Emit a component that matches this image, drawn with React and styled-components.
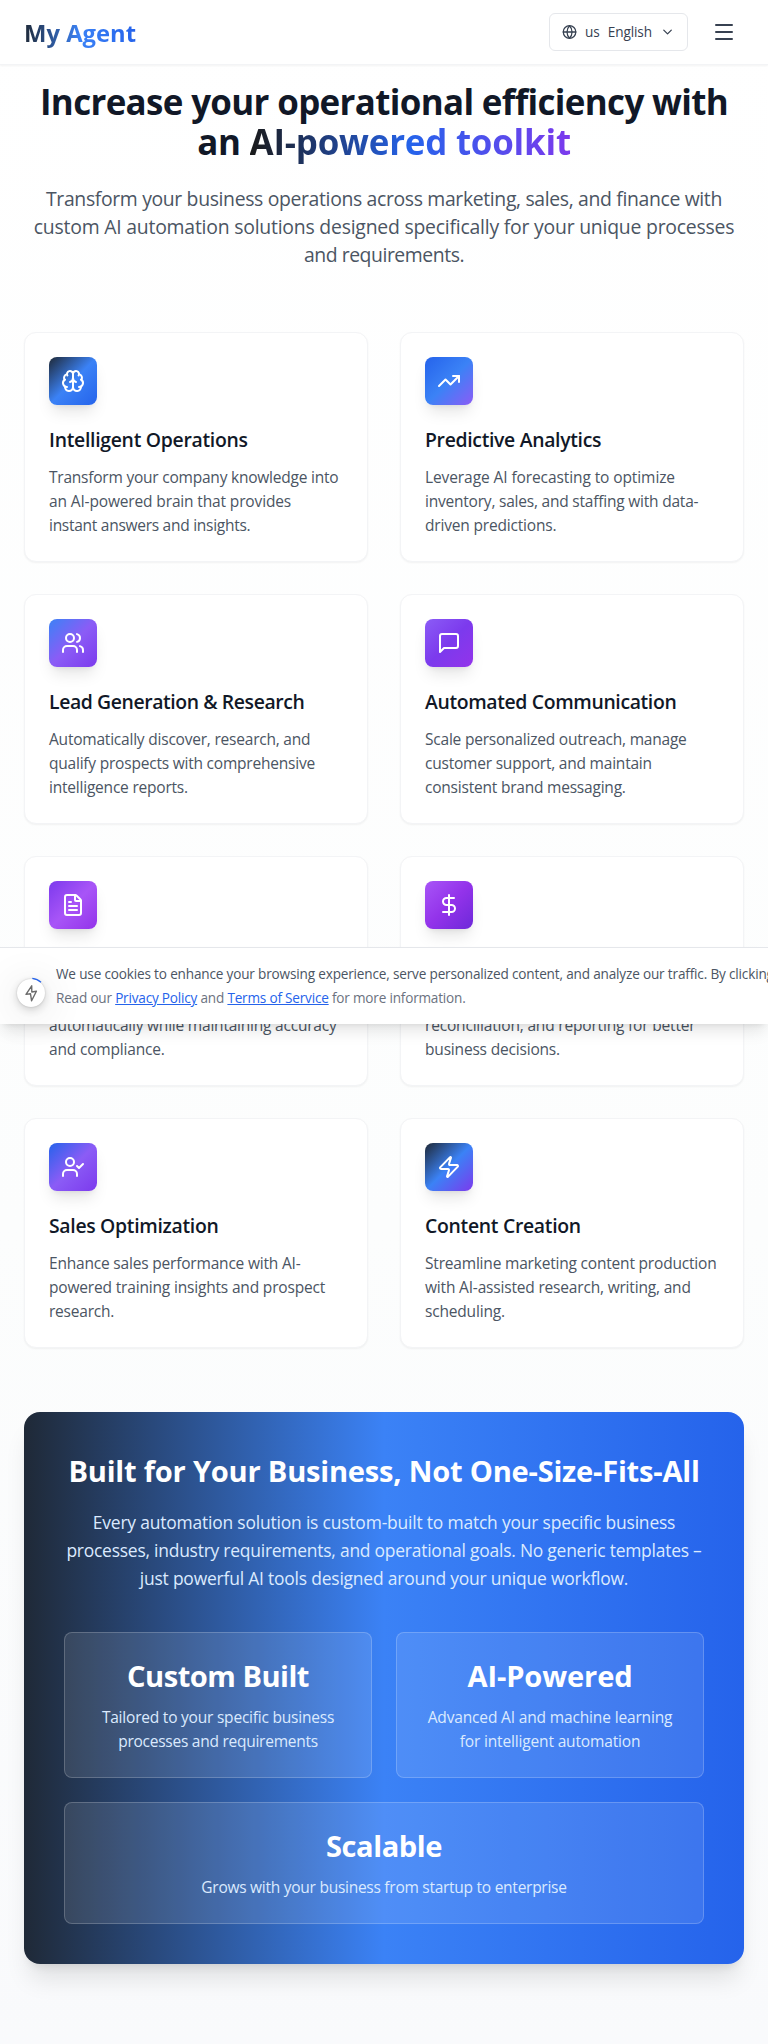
import React from "react";
import styled, { createGlobalStyle } from "styled-components";
import {
  Brain, TrendingUp, Users, FileText, DollarSign, UserCheck, Zap,
  Globe, ChevronDown, Menu,
} from "lucide-react";

const GlobalStyle = createGlobalStyle`
  *, *::before, *::after { box-sizing: border-box; }
  body {
    margin: 0;
    font-family: "Open Sans", "Noto Sans", sans-serif;
    color: #111827;
    background: #f9fafb;
  }
  h1, h2, h3, p { margin: 0; }
`;

const Page = styled.div`
  position: relative;
  width: 100%;
  min-height: 2044px;
  overflow: hidden;
  background: linear-gradient(180deg, #ffffff 0%, #fcfdfd 60%, #f9fafc 100%);
`;

const Header = styled.header`
  display: flex;
  align-items: center;
  justify-content: space-between;
  height: 65px;
  padding: 0 24px;
  background: #fff;
  border-bottom: 1px solid #f3f4f6;
  box-shadow: 0 1px 2px rgba(0, 0, 0, 0.05);
`;

const Logo = styled.div`
  padding-top: 1px;
  font-size: 23.8px;
  line-height: 32px;
  font-weight: 700;
  color: transparent;
  background: linear-gradient(90deg, #1f2937, #3b82f6, #2563eb);
  background-clip: text;
`;

const HeaderActions = styled.div`
  display: flex;
  align-items: center;
  gap: 16px;
`;

const LanguageButton = styled.button`
  display: flex;
  align-items: center;
  width: 139px;
  height: 38px;
  padding: 0 12px;
  gap: 8px;
  border: 1px solid #e5e7eb;
  border-radius: 6px;
  background: #fff;
  color: #374151;
  font: 400 13.6px/20px "Open Sans", sans-serif;
  letter-spacing: -0.1px;
  margin-bottom: 1px;
  svg:last-child { margin-left: auto; }
`;

const MenuButton = styled.button`
  display: grid;
  place-items: center;
  width: 40px;
  height: 40px;
  padding: 0;
  border: 0;
  background: none;
  color: #374151;
  margin: 0 0 1px;
`;

const Main = styled.main`
  padding: 15px 24px 0;
`;

const Line = styled.span`
  display: block;
  white-space: nowrap;
  letter-spacing: ${(p) => p.$track}px;
`;

const Hero = styled.section`
  text-align: center;
  margin-bottom: 64px;
`;

const HeroTitle = styled.h1`
  padding-top: 2px;
  height: 80px;
  margin-bottom: 24px;
  font-size: 34.92px;
  line-height: 40px;
  font-weight: 700;
`;

const Accent = styled.span`
  color: transparent;
  background: linear-gradient(90deg, #1a1a1a, #2563eb, #7c3aed);
  background-clip: text;
`;

const HeroText = styled.p`
  height: 84px;
  padding-top: 1px;
  font-size: 19.4px;
  line-height: 28px;
  color: #4b5563;
`;

const Grid = styled.div`
  display: grid;
  grid-template-columns: 1fr 1fr;
  gap: 32px;
`;

const Card = styled.article`
  display: flex;
  flex-direction: column;
  height: 230px;
  padding: 24px;
  border: 1px solid #f3f4f6;
  border-radius: 12px;
  background: #fff;
  box-shadow: 0 1px 2px rgba(0, 0, 0, 0.05);
`;

const IconTile = styled.div`
  display: grid;
  place-items: center;
  flex: none;
  width: 48px;
  height: 48px;
  margin-bottom: 21px;
  border-radius: 8px;
  color: #fff;
  background: linear-gradient(135deg, ${(p) => p.$stops});
  box-shadow: 0 10px 15px -3px rgba(0, 0, 0, 0.1), 0 4px 6px -4px rgba(0, 0, 0, 0.1);
`;

const CardTitle = styled.h3`
  font-size: 19.4px;
  line-height: 28px;
  font-weight: 600;
`;

const CardText = styled.p`
  margin-top: auto;
  font-size: 15.52px;
  line-height: 24px;
  color: #4b5563;
`;

const Promo = styled.section`
  margin-top: 64px;
  height: 552px;
  padding: 40px;
  border-radius: 16px;
  text-align: center;
  color: #fff;
  background: linear-gradient(90deg, #1f2937, #3b82f6, #2563eb);
  box-shadow: 0 20px 25px -5px rgba(0, 0, 0, 0.1), 0 8px 10px -6px rgba(0, 0, 0, 0.1);
`;

const PromoTitle = styled.h2`
  padding-top: 1px;
  height: 36px;
  margin-bottom: 20px;
  font-size: 29.1px;
  line-height: 36px;
  font-weight: 700;
`;

const PromoText = styled.p`
  height: 84px;
  margin-bottom: 40px;
  font-size: 17.46px;
  line-height: 28px;
  color: #dbeafe;
`;

const Tiles = styled.div`
  display: grid;
  grid-template-columns: 1fr 1fr;
  gap: 24px;
`;

const Tile = styled.div`
  grid-column: ${(p) => (p.$wide ? "1 / -1" : "auto")};
  padding: 25px 24px 24px;
  border: 1px solid rgba(255, 255, 255, 0.2);
  border-radius: 8px;
  background: rgba(255, 255, 255, 0.1);
  height: ${(p) => (p.$wide ? 122 : 146)}px;
`;

const TileTitle = styled.h3`
  margin-bottom: 11px;
  font-size: 29.1px;
  line-height: 36px;
  font-weight: 700;
`;

const TileText = styled.p`
  font-size: 15.52px;
  line-height: 24px;
  color: #dbeafe;
`;

const CookieBar = styled.aside`
  position: absolute;
  top: 947px;
  left: 0;
  right: 0;
  height: 77px;
  padding: 14px 0 0 56px;
  border-top: 1px solid #e5e7eb;
  background: #fff;
  box-shadow: 0 10px 15px -3px rgba(0, 0, 0, 0.1), 0 4px 6px -4px rgba(0, 0, 0, 0.1);
  font-size: 13.58px;
  line-height: 24px;
  letter-spacing: -0.17px;
  color: #4b5563;
  white-space: nowrap;
`;

const CookieNote = styled.p`
  letter-spacing: -0.2px;
  color: #6b7280;
`;

const CookieLink = styled.a`
  color: #2563eb;
  text-decoration: underline;
`;

const FloatingBadge = styled.div`
  position: absolute;
  left: 17px;
  top: 30.5px;
  width: 28px;
  height: 28px;
  border-radius: 50%;
  background: #fff;
  box-shadow: 0 0 2px rgba(0, 0, 0, 0.2), 0 3px 8px rgba(0, 0, 0, 0.16), 0 6px 44px rgba(0, 0, 0, 0.16);
`;

const BadgeArt = styled.svg`
  position: absolute;
  left: -4px;
  top: -4px;
`;

const MessageIcon = () => (
  <svg width="24" height="24" viewBox="0 0 24 24" fill="none" stroke="currentColor"
    strokeWidth="2" strokeLinecap="round" strokeLinejoin="round">
    <path d="M21 15a2 2 0 0 1-2 2H7l-4 4V5a2 2 0 0 1 2-2h14a2 2 0 0 1 2 2z" />
  </svg>
);

const features = [
  {
    id: "operations", icon: Brain, stops: "#1f2937, #3b82f6, #2563eb", title: ["Intelligent Operations", -0.29],
    text: [["Transform your company knowledge into", -0.23], ["an AI-powered brain that provides", -0.15], ["instant answers and insights.", -0.28]],
  },
  {
    id: "analytics", icon: TrendingUp, stops: "#2563eb, #3b82f6, #8b5cf6", title: ["Predictive Analytics", -0.32],
    text: [["Leverage AI forecasting to optimize", -0.1], ["inventory, sales, and staffing with data-", -0.22], ["driven predictions.", -0.19]],
  },
  {
    id: "leads", icon: Users, stops: "#3b82f6, #8b5cf6, #7c3aed", title: ["Lead Generation & Research", -0.4],
    text: [["Automatically discover, research, and", -0.22], ["qualify prospects with comprehensive", -0.22], ["intelligence reports.", -0.22]],
  },
  {
    id: "communication", icon: MessageIcon, stops: "#8b5cf6, #7c3aed, #9333ea", title: ["Automated Communication", -0.36],
    text: [["Scale personalized outreach, manage", -0.22], ["customer support, and maintain", -0.22], ["consistent brand messaging.", -0.22]],
  },
  {
    id: "documents", icon: FileText, stops: "#7c3aed, #a855f7, #9333ea",
    text: [["automatically while maintaining accuracy", -0.22], ["and compliance.", -0.19]],
  },
  {
    id: "finance", icon: DollarSign, stops: "#a855f7, #9333ea, #6d28d9",
    text: [["reconciliation, and reporting for better", -0.19], ["business decisions.", -0.19]],
  },
  {
    id: "sales", icon: UserCheck, stops: "#2563eb, #8b5cf6, #7c3aed", title: ["Sales Optimization", -0.31],
    text: [["Enhance sales performance with AI-", -0.2], ["powered training insights and prospect", -0.18], ["research.", -0.22]],
  },
  {
    id: "content", icon: Zap, stops: "#1f2937, #3b82f6, #7c3aed", title: ["Content Creation", -0.3],
    text: [["Streamline marketing content production", -0.2], ["with AI-assisted research, writing, and", -0.19], ["scheduling.", -0.19]],
  },
];

const tiles = [
  { title: ["Custom Built", -0.5], text: [["Tailored to your specific business", -0.22], ["processes and requirements", -0.26]] },
  { title: ["AI-Powered", -0.12], text: [["Advanced AI and machine learning", -0.16], ["for intelligent automation", -0.16]] },
  { title: ["Scalable", -0.41], text: [["Grows with your business from startup to enterprise", -0.27]], wide: true },
];

const Lines = ({ items }) => items.map(([text, track]) => <Line key={text} $track={track}>{text}</Line>);

export default function App() {
  return (
    <>
      <GlobalStyle />
      <Page>
        <Header>
          <Logo>My Agent</Logo>
          <HeaderActions>
            <LanguageButton>
              <Globe size={16} />
              <span>us</span>
              <span>English</span>
              <ChevronDown size={16} />
            </LanguageButton>
            <MenuButton aria-label="Menu"><Menu size={24} /></MenuButton>
          </HeaderActions>
        </Header>

        <Main>
          <Hero>
            <HeroTitle>
              <Line $track={-0.65}>Increase your operational efficiency with</Line>
              <Line $track={-0.22}>an <Accent>AI-powered toolkit</Accent></Line>
            </HeroTitle>
            <HeroText>
              <Lines items={[
                ["Transform your business operations across marketing, sales, and finance with", -0.35],
                ["custom AI automation solutions designed specifically for your unique processes", -0.22],
                ["and requirements.", -0.45],
              ]} />
            </HeroText>
          </Hero>

          <Grid>
            {features.map(({ id, icon: Icon, stops, title, text }) => (
              <Card key={id}>
                <IconTile $stops={stops}><Icon /></IconTile>
                {title && <CardTitle><Lines items={[title]} /></CardTitle>}
                <CardText><Lines items={text} /></CardText>
              </Card>
            ))}
          </Grid>

          <Promo>
            <PromoTitle><Line $track={-0.22}>Built for Your Business, Not One-Size-Fits-All</Line></PromoTitle>
            <PromoText>
              <Lines items={[
                ["Every automation solution is custom-built to match your specific business", -0.19],
                ["processes, industry requirements, and operational goals. No generic templates –", -0.23],
                ["just powerful AI tools designed around your unique workflow.", -0.2],
              ]} />
            </PromoText>
            <Tiles>
              {tiles.map(({ title, text, wide }) => (
                <Tile key={title[0]} $wide={wide}>
                  <TileTitle><Lines items={[title]} /></TileTitle>
                  <TileText><Lines items={text} /></TileText>
                </Tile>
              ))}
            </Tiles>
          </Promo>
        </Main>

        <CookieBar>
          <FloatingBadge>
            <BadgeArt width="36" height="36" viewBox="0 0 36 36" fill="none">
              <path d="M19.3 3.3A14.8 14.8 0 0 1 28 7.2" stroke="#2563eb" strokeWidth="1.3" />
              <path d="M18.7 10.8L13 19.4L17.5 18.8L18.6 25.8L23.4 16.2L18.8 17Z" stroke="#6b6b6b" strokeWidth="1.4" strokeLinejoin="round" />
            </BadgeArt>
          </FloatingBadge>
          <p>We use cookies to enhance your browsing experience, serve personalized content, and analyze our traffic. By clicking</p>
          <CookieNote>
            Read our <CookieLink>Privacy Policy</CookieLink> and <CookieLink>Terms of Service</CookieLink> for more information.
          </CookieNote>
        </CookieBar>
      </Page>
    </>
  );
}
